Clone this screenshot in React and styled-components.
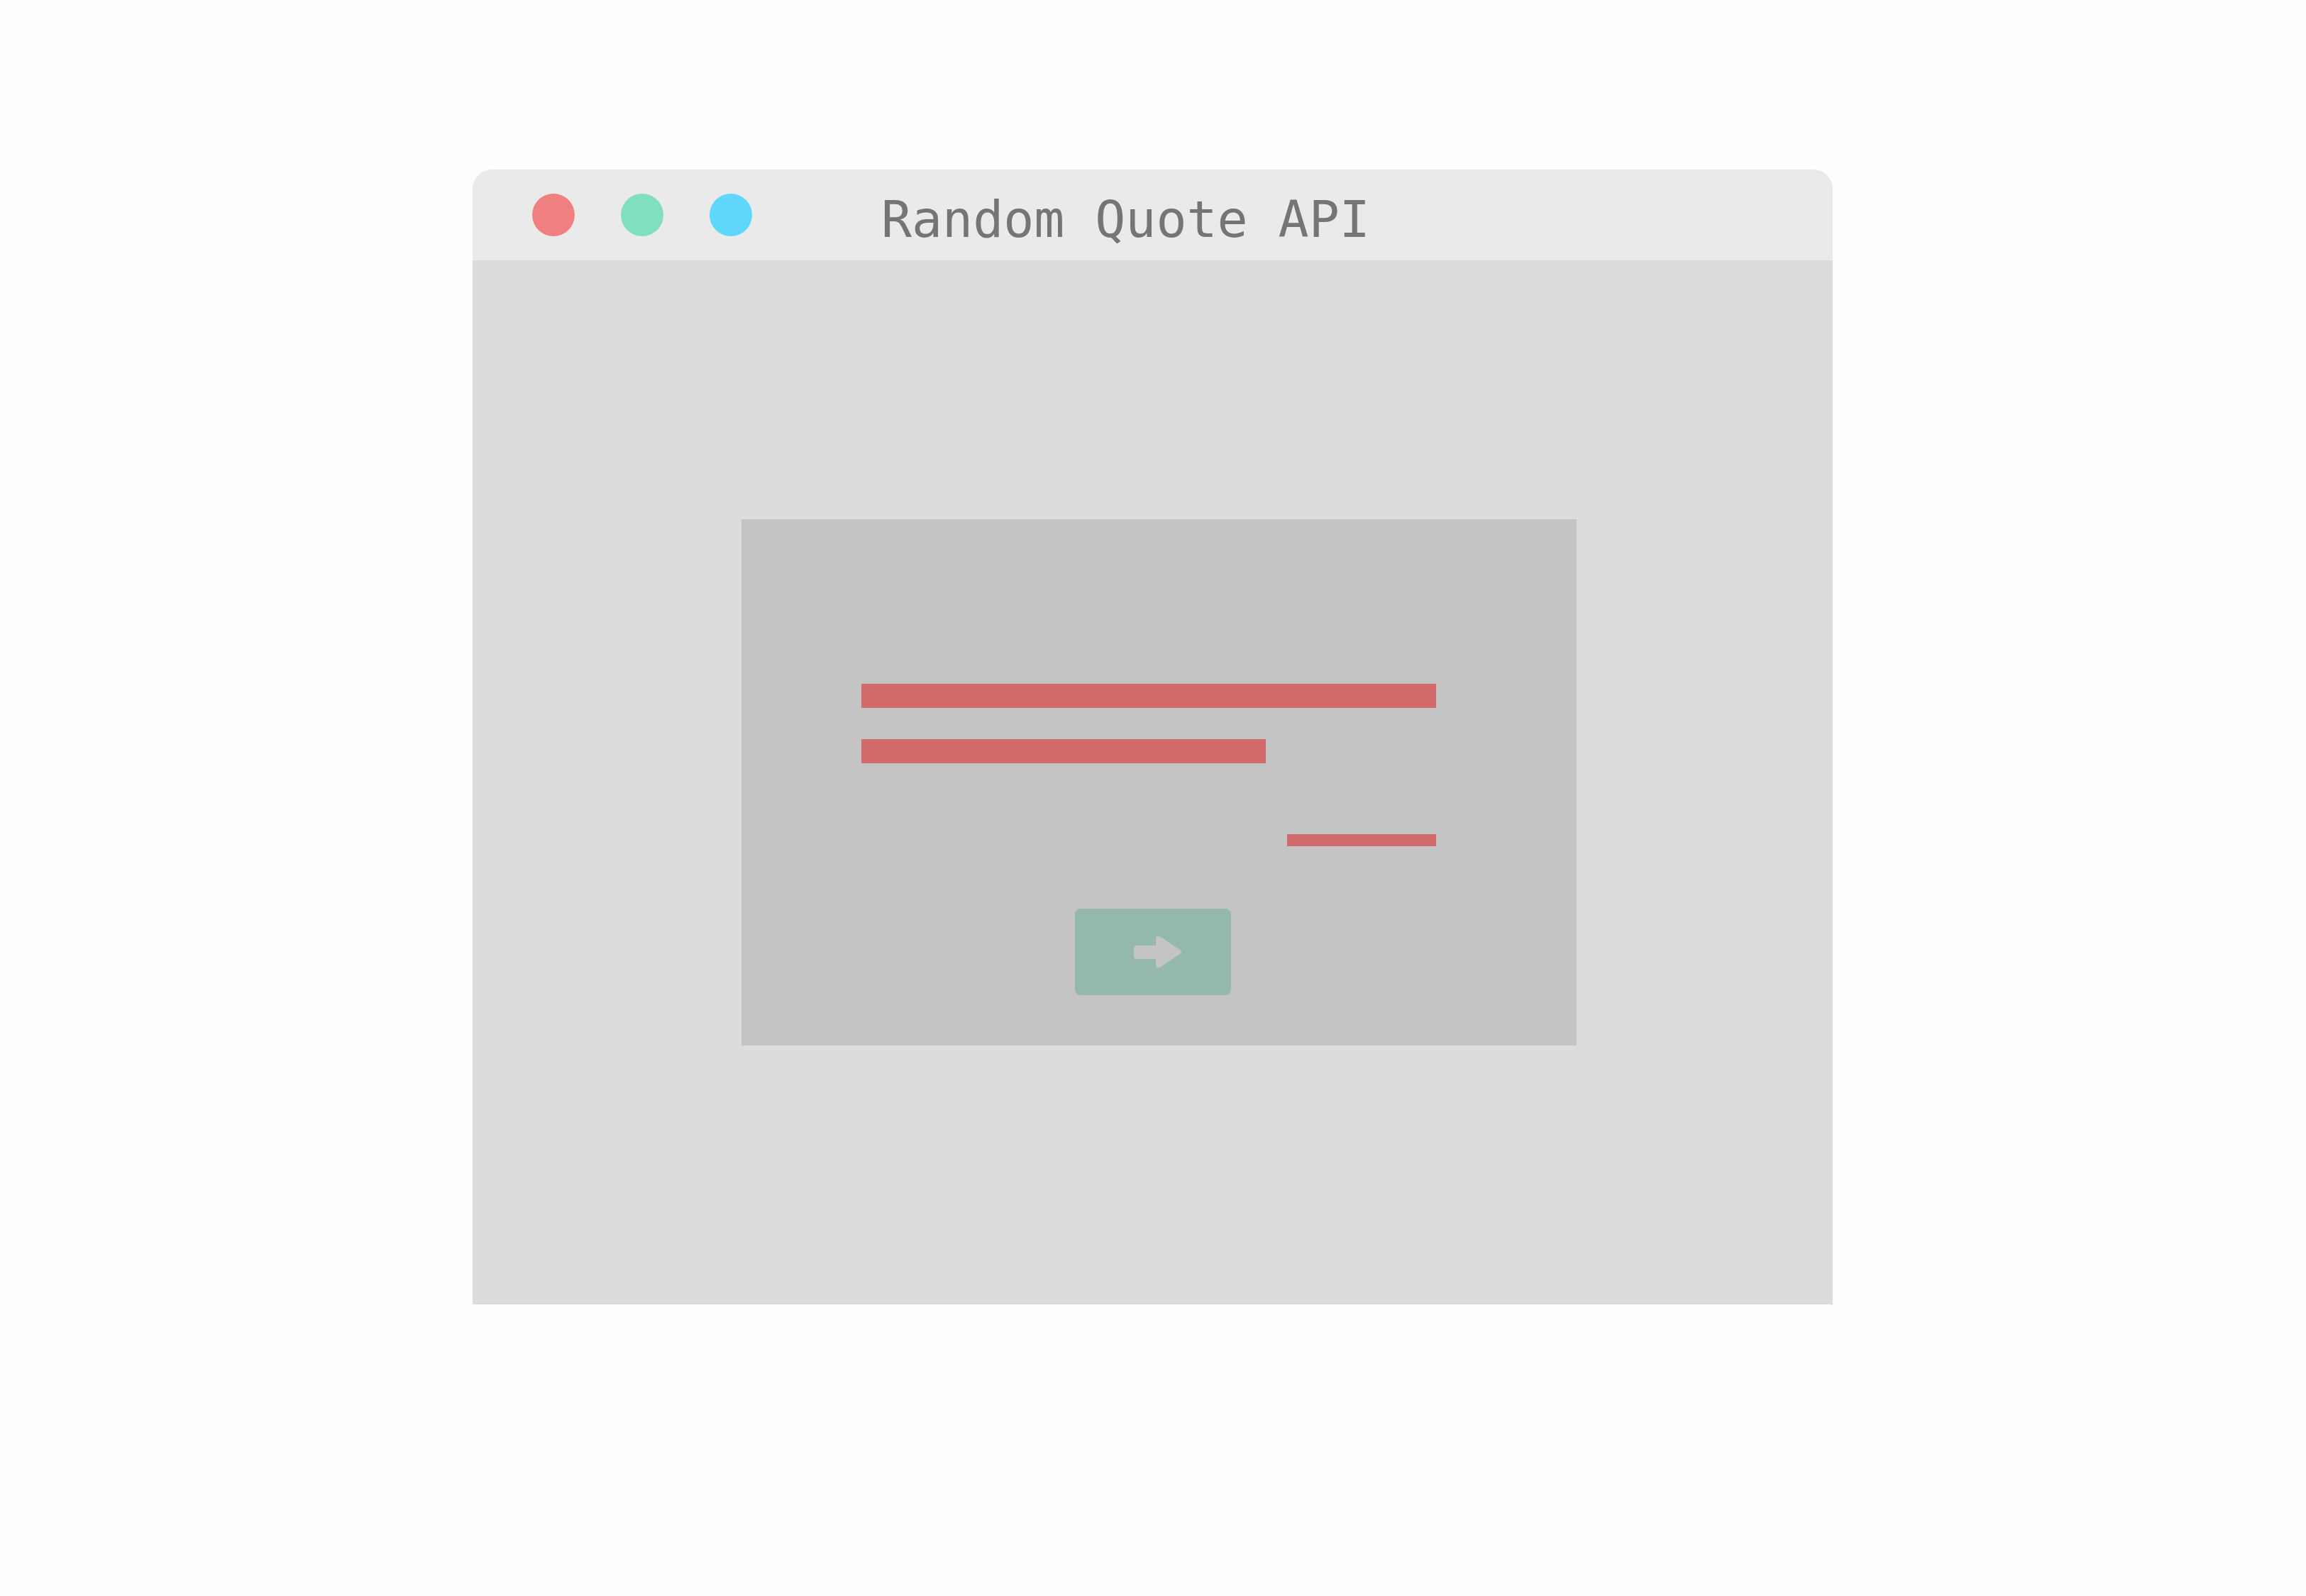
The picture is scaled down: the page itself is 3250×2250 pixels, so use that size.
import React from "react";
import styled, { createGlobalStyle } from "styled-components";

const GlobalStyle = createGlobalStyle`
  html, body {
    margin: 0;
    padding: 0;
    background: #fefefe;
  }
`;

const Page = styled.div`
  width: 3250px;
  height: 2250px;
  padding: 239px 0 0 666px;
  box-sizing: border-box;
`;

const Window = styled.div`
  width: 1917px;
  display: flex;
  flex-direction: column;
  border-radius: 27px 27px 0 0;
  overflow: hidden;
`;

const TitleBar = styled.div`
  height: 128px;
  background: #eaeaea;
  display: flex;
  align-items: center;
  padding-left: 84px;
  gap: 65px;
`;

const Dot = styled.span`
  width: 60px;
  height: 60px;
  border-radius: 50%;
  background: ${(p) => p.color};
  flex-shrink: 0;
`;

const Title = styled.div`
  margin-left: 117px;
  margin-top: 12px;
  font-family: "DejaVu Sans Mono", "Liberation Mono", monospace;
  font-size: 71.5px;
  color: #757575;
  white-space: nowrap;
`;

const Body = styled.div`
  height: 1472px;
  background: #dcdcdc;
  display: flex;
  align-items: center;
  padding-left: 379px;
`;

const Card = styled.div`
  width: 1177px;
  height: 742px;
  background: #c4c4c4;
  box-sizing: border-box;
  padding: 232px 0 0 169px;
  display: flex;
  flex-direction: column;
`;

const Line = styled.div`
  width: ${(p) => p.w}px;
  height: ${(p) => p.h || 34}px;
  margin-top: ${(p) => p.gap || 0}px;
  margin-left: ${(p) => p.indent || 0}px;
  background: #d16b6b;
`;

const NextButton = styled.button`
  margin: 88px 0 0 301px;
  width: 220px;
  height: 122px;
  border: none;
  border-radius: 8px;
  background: #94b9ac;
  display: flex;
  align-items: center;
  justify-content: center;
  padding: 0 0 0 15px;
  cursor: pointer;
`;

const Arrow = () => (
  <svg width="70" height="46" viewBox="0 0 70 46">
    <rect x="0" y="14" width="36" height="19" rx="4" fill="#c4c4c4" />
    <path
      d="M31 6 Q31 -2 38 2 L65 20 Q69 23 65 26 L38 44 Q31 48 31 40 Z"
      fill="#c4c4c4"
    />
  </svg>
);

export default function App() {
  return (
    <>
      <GlobalStyle />
      <Page>
        <Window>
          <TitleBar>
            <Dot color="#f08080" />
            <Dot color="#80dfc0" />
            <Dot color="#5fd6fc" />
            <Title>Random Quote API</Title>
          </TitleBar>
          <Body>
            <Card>
              <Line w={810} />
              <Line w={570} gap={44} />
              <Line w={210} h={17} gap={100} indent={600} />
              <NextButton aria-label="Next quote">
                <Arrow />
              </NextButton>
            </Card>
          </Body>
        </Window>
      </Page>
    </>
  );
}
